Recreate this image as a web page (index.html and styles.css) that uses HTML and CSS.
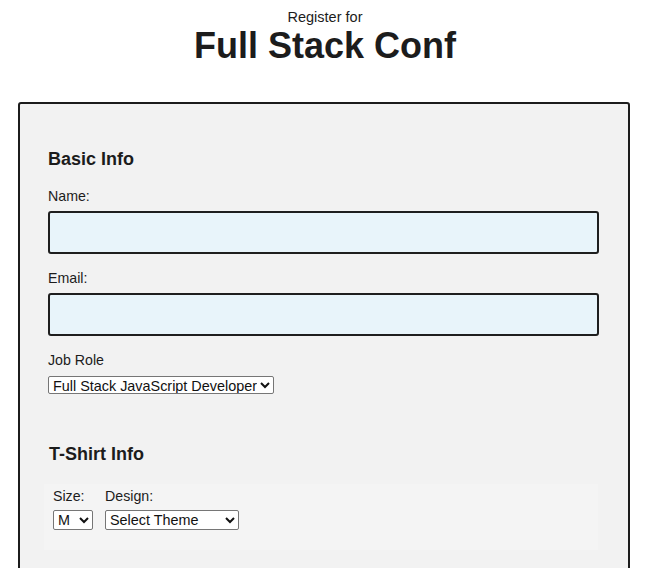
FILE: index.html
```html
<!DOCTYPE html>
<html>
<head>
<meta charset="utf-8">
<link rel="stylesheet" href="styles.css">
</head>
<body>
<header class="header">
  <p class="sub">Register for</p>
  <h1 class="title">Full Stack Conf</h1>
</header>
<form class="form">
  <fieldset class="section basic">
    <h2 class="legend">Basic Info</h2>
    <label class="label" for="name">Name:</label>
    <input class="text" id="name" type="text">
    <label class="label" for="email">Email:</label>
    <input class="text" id="email" type="email">
    <label class="label" for="title">Job Role</label>
    <select class="select role" id="title">
      <option>Full Stack JavaScript Developer</option>
    </select>
  </fieldset>
  <fieldset class="section shirt">
    <h2 class="legend legend-shirt">T-Shirt Info</h2>
    <div class="shirt-box">
      <div class="shirt-col">
        <label class="label small" for="size">Size:</label>
        <select class="select size" id="size"><option>M</option></select>
      </div>
      <div class="shirt-col">
        <label class="label small" for="design">Design:</label>
        <select class="select design" id="design"><option>Select Theme</option></select>
      </div>
    </div>
  </fieldset>
</form>
</body>
</html>
```
FILE: styles.css
```css
* { box-sizing: border-box; }
body {
  margin: 0;
  font-family: "Liberation Sans", Arial, sans-serif;
  color: #1c1c1c;
  background: #fff;
  overflow: hidden;
}
.header {
  text-align: center;
  padding-top: 9px;
}
.sub {
  margin: 0;
  font-size: 14.5px;
  line-height: 16px;
}
.title {
  margin: 0;
  font-size: 36px;
  line-height: 42px;
  font-weight: bold;
}
.form {
  margin: 35px 0 0 18px;
  width: 612px;
  border: 2px solid #1c1c1c;
  border-radius: 3px;
  background: #f2f2f2;
  padding: 0 29px 40px 28px;
  height: 520px;
}
.section {
  border: 0;
  margin: 0;
  padding: 0;
  display: flex;
  flex-direction: column;
  align-items: flex-start;
}
.legend {
  margin: 44px 0 0;
  font-size: 18px;
  line-height: 22px;
  font-weight: bold;
}
.label {
  font-size: 14.2px;
  line-height: 16px;
  margin-top: 16px;
  margin-bottom: 7px;
}
.legend + .label { margin-top: 18px; }
.text {
  width: 100%;
  height: 43px;
  border: 2px solid #1e1e1e;
  border-radius: 3px;
  background: #e8f4fa;
  margin: 0;
}
.select {
  font-family: "Liberation Sans", Arial, sans-serif;
  font-size: 14.4px;
  height: 18px;
  padding: 0;
  border: 1px solid #767676;
  border-radius: 2px;
  background: #fff;
  color: #111;
}
.role {
  width: 226px;
  margin-top: 1px;
}
.legend-shirt {
  margin-top: 49px;
  margin-left: 1px;
}
.shirt-box {
  margin-top: 19px;
  margin-left: -4px;
  width: 554px;
  background: #f4f4f4;
  padding: 4px 9px 20px;
  display: flex;
  gap: 12px;
}
.shirt-col {
  display: flex;
  flex-direction: column;
  align-items: flex-start;
}
.small {
  margin-top: 0;
  margin-bottom: 6px;
}
.size { width: 40px; height: 20px; }
.design { width: 134px; height: 20px; }
```
